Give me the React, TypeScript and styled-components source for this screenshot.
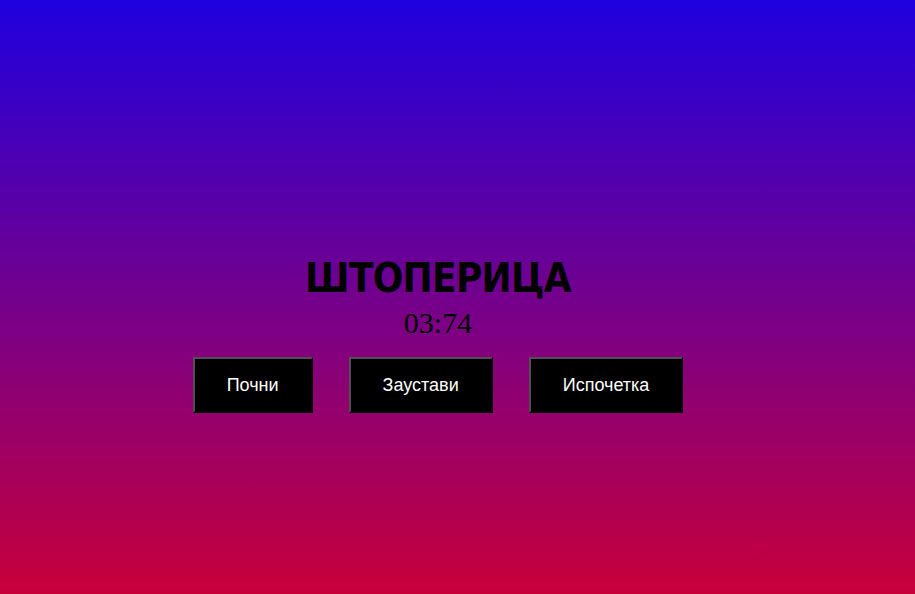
import React from "react";
import styled, { createGlobalStyle } from "styled-components";

const GlobalStyle = createGlobalStyle`
  html, body {
    margin: 0;
    padding: 0;
    height: 100%;
  }
  body {
    font-family: "Liberation Serif", "Times New Roman", serif;
  }
  #root {
    min-height: 100%;
  }
`;

const Page = styled.main`
  box-sizing: border-box;
  min-height: 100vh;
  padding: 258px 39px 0 0;
  background: linear-gradient(to bottom, #1f00df, #c8003a);
  display: flex;
  flex-direction: column;
  align-items: center;
`;

const Title = styled.h1`
  margin: 0 0 10px;
  font-family: "Comic Sans MS", "DejaVu Sans Condensed", "DejaVu Sans", sans-serif;
  font-stretch: condensed;
  font-weight: bold;
  font-size: 40px;
  line-height: 40px;
  letter-spacing: -0.7px;
  color: #000;
`;

const Time = styled.div`
  margin: 0 0 19px;
  font-family: "Liberation Serif", "Times New Roman", serif;
  font-size: 30px;
  line-height: 30px;
  color: #000;
`;

const ButtonRow = styled.div`
  display: flex;
  gap: 36px;
`;

const ControlButton = styled.button`
  box-sizing: border-box;
  height: 56px;
  padding: 0 32px;
  border: 2px solid;
  border-color: #505050 #080808 #080808 #505050;
  background: #000;
  color: #fff;
  font-family: "Liberation Sans", Arial, sans-serif;
  font-size: 18px;
  line-height: 20px;
  cursor: pointer;
`;

export default function App() {
  return (
    <>
      <GlobalStyle />
      <Page>
        <Title>ШТОПЕРИЦА</Title>
        <Time>03:74</Time>
        <ButtonRow>
          <ControlButton>Почни</ControlButton>
          <ControlButton>Заустави</ControlButton>
          <ControlButton>Испочетка</ControlButton>
        </ButtonRow>
      </Page>
    </>
  );
}
